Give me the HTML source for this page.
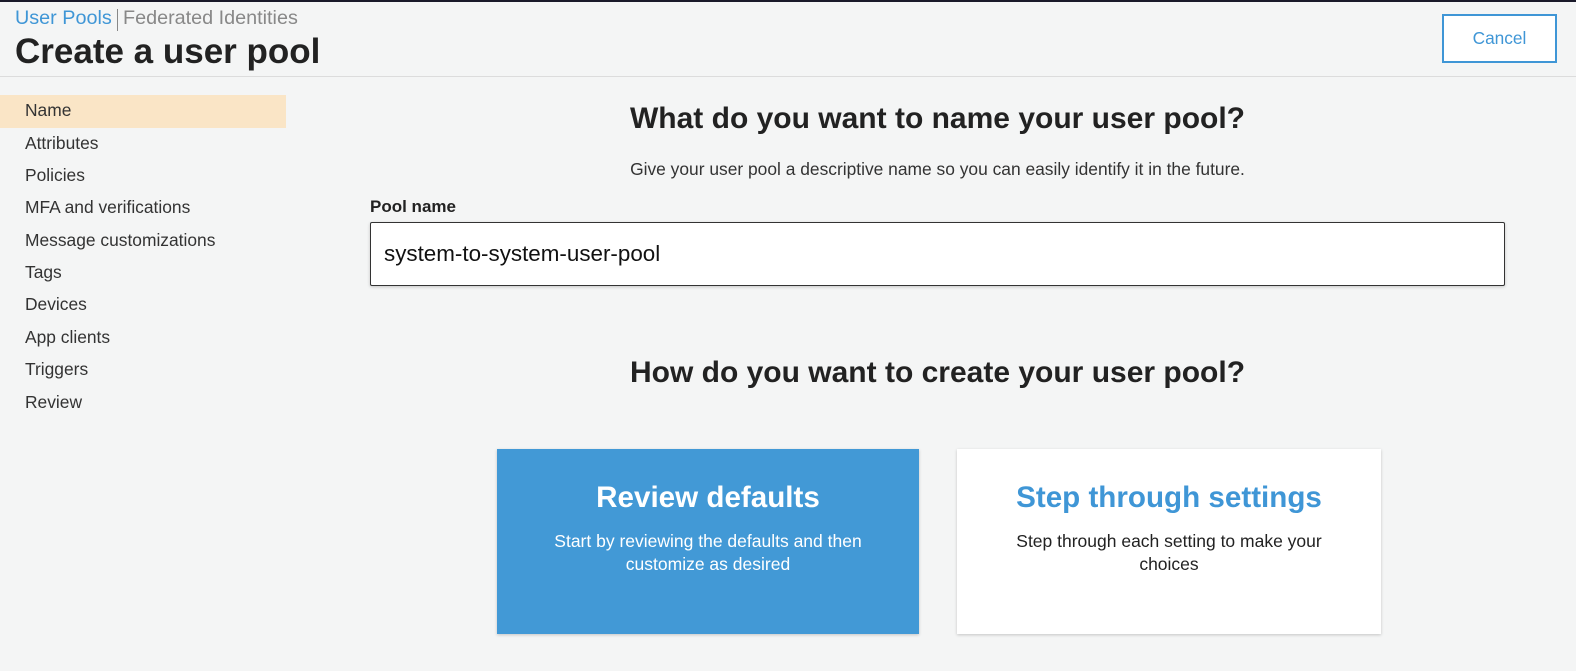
<!DOCTYPE html>
<html><head><style>
body{margin:0;width:1576px;height:671px;background:#f4f5f5;font-family:"Liberation Sans",Arial,sans-serif;position:relative;overflow:hidden;border-top:2px solid #1a1a2a;box-sizing:border-box}
.a{position:absolute;white-space:nowrap}
.nav{position:absolute;left:25px;font-size:17.4px;color:#333}
</style></head><body>
<div class="a" style="left:15px;top:5px;font-size:19.8px;color:#3f96d6">User Pools</div>
<div class="a" style="left:117px;top:7px;height:22px;border-left:1px solid #888"></div>
<div class="a" style="left:123px;top:5px;font-size:19.8px;color:#888">Federated Identities</div>
<div class="a" style="left:15px;top:30px;font-size:35px;font-weight:bold;color:#222">Create a user pool</div>
<div class="a" style="left:1442px;top:12px;width:111px;height:45px;border:2px solid #3f96d6;background:#fff;color:#3f96d6;font-size:17.3px;text-align:center;line-height:45px">Cancel</div>
<div class="a" style="left:0;top:74px;width:1576px;border-top:1px solid #dcdcdc"></div>
<div class="a" style="left:0;top:93px;width:286px;height:33px;background:#fae5c6"></div>
<div class="nav" style="top:98px">Name</div>
<div class="nav" style="top:131px">Attributes</div>
<div class="nav" style="top:163px">Policies</div>
<div class="nav" style="top:195px">MFA and verifications</div>
<div class="nav" style="top:228px">Message customizations</div>
<div class="nav" style="top:260px">Tags</div>
<div class="nav" style="top:292px">Devices</div>
<div class="nav" style="top:325px">App clients</div>
<div class="nav" style="top:357px">Triggers</div>
<div class="nav" style="top:390px">Review</div>
<div class="a" style="left:370px;width:1135px;top:100px;text-align:center;font-size:30px;font-weight:bold;color:#222">What do you want to name your user pool?</div>
<div class="a" style="left:370px;width:1135px;top:157px;text-align:center;font-size:17.4px;color:#333">Give your user pool a descriptive name so you can easily identify it in the future.</div>
<div class="a" style="left:370px;top:195px;font-size:17px;font-weight:bold;color:#222">Pool name</div>
<div class="a" style="left:370px;top:220px;width:1133px;height:62px;border:1px solid #333;border-radius:2px;background:#fff;box-shadow:0 1px 3px rgba(0,0,0,.2)"></div>
<div class="a" style="left:384px;top:239px;font-size:22.4px;color:#111">system-to-system-user-pool</div>
<div class="a" style="left:370px;width:1135px;top:354px;text-align:center;font-size:30px;font-weight:bold;color:#222">How do you want to create your user pool?</div>
<div class="a" style="left:497px;top:447px;width:422px;height:185px;background:#4299d6;box-shadow:0 1px 3px rgba(0,0,0,.2);color:#fff;text-align:center;white-space:normal">
<div style="margin-top:32px;font-size:29.6px;font-weight:bold">Review defaults</div>
<div style="margin:15px auto 0;width:340px;font-size:17.5px;line-height:23px">Start by reviewing the defaults and then customize as desired</div></div>
<div class="a" style="left:957px;top:447px;width:424px;height:185px;background:#fff;box-shadow:0 1px 3px rgba(0,0,0,.2);color:#222;text-align:center;white-space:normal">
<div style="margin-top:32px;font-size:29.6px;font-weight:bold;color:#3f96d6">Step through settings</div>
<div style="margin:15px auto 0;width:340px;font-size:17.5px;line-height:23px">Step through each setting to make your choices</div></div>
</body></html>
